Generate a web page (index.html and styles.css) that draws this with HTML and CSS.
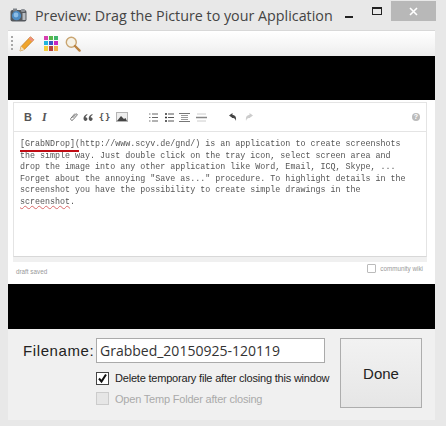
FILE: index.html
```html
<!DOCTYPE html>
<html lang="en">
<head>
    <meta charset="UTF-8">
    <title>Preview: Drag the Picture to your Application</title>
    <link rel="stylesheet" href="styles.css">
</head>
<body>
    <div class="window">
        <!-- Title bar -->
        <div class="titlebar">
            <svg class="app-icon" width="17" height="14" viewBox="0 0 17 14">
                <rect x="0.5" y="2" width="16" height="11.5" rx="2" fill="#55595e"/>
                <rect x="3" y="0.5" width="4" height="3" fill="#7d8288"/>
                <rect x="11" y="1" width="4" height="3" rx="1" fill="#8c9096"/>
                <circle cx="6.5" cy="7.7" r="4.6" fill="#4d8cc4"/>
                <circle cx="6" cy="7" r="2.4" fill="#8dbde6"/>
                <rect x="12.5" y="5" width="3" height="7" fill="#b9bdc2"/>
            </svg>
            <span class="title">Preview: Drag the Picture to your Application</span>
            <div class="window-buttons">
                <div class="btn-min"></div>
                <div class="btn-max"></div>
                <div class="btn-close">
                    <svg width="9" height="9" viewBox="0 0 9 9"><path d="M1 1l7 7M8 1l-7 7" stroke="#fff" stroke-width="1.6"/></svg>
                </div>
            </div>
        </div>

        <div class="client">
            <!-- Tool strip -->
            <div class="toolstrip">
                <div class="grip"></div>
                <svg width="16" height="17" viewBox="0 0 16 17">
                    <path d="M1 16l1.2-4.6L11.4 1.800l3.400 3L5.400 14.400z" fill="#f0a52c" stroke="#b9761a" stroke-width="0.7"/>
                    <path d="M11.400 1.800l3.400 3-1.800 1.900-3.400-3z" fill="#ee8f7c"/>
                    <path d="M1 16l1.200-4.600 3.200 3z" fill="#f6dfb6"/>
                </svg>
                <svg class="palette" width="14" height="15" viewBox="0 0 14 15">
                    <rect x="0" y="0" width="4" height="4" fill="#d63fb0"/>
                    <rect x="5" y="0" width="4" height="4" fill="#57b84a"/>
                    <rect x="10" y="0" width="4" height="4" fill="#3fb56c"/>
                    <rect x="0" y="5" width="4" height="4" fill="#22b5dc"/>
                    <rect x="5" y="5" width="4" height="4" fill="#3a57c4"/>
                    <rect x="10" y="5" width="4" height="4" fill="#c824c0"/>
                    <rect x="0" y="10" width="4" height="5" fill="#f2cf3a"/>
                    <rect x="5" y="10" width="4" height="5" fill="#b8433c"/>
                    <rect x="10" y="10" width="4" height="5" fill="#f0b04a"/>
                </svg>
                <svg width="16" height="16" viewBox="0 0 16 16">
                    <circle cx="6.300" cy="6.300" r="5" fill="#f6f2e6" stroke="#c9a571" stroke-width="1.400"/>
                    <path d="M10 10l4.600 4.600" stroke="#bb8340" stroke-width="2.400" stroke-linecap="round"/>
                </svg>
            </div>

            <div class="black-band top-band"></div>

            <!-- Embedded editor -->
            <div class="editor-panel">
                <div class="editor">
                    <div class="editor-tools">
                        <span class="tool-b">B</span>
                        <span class="tool-i">I</span>
                        <svg class="ico ico-link" width="9" height="10" viewBox="0 0 9 10"><path d="M3.500 6L7 2.200c.7-.8 1.700.2 1 1L4 7.800c-1.200 1.500-3.200-.2-2-1.700L6 1.500" fill="none" stroke="#666" stroke-width="0.900"/></svg>
                        <svg class="ico ico-quote" width="10" height="7" viewBox="0 0 10 7"><path d="M4.300 0C2 .8.500 2.200.500 4.500c0 1.500 1 2.500 2 2.500s1.900-.8 1.900-1.900S3.600 3.300 2.500 3.300C2.700 2.200 3.300 1.500 4.300 1zM9.500 0C7.200.8 5.700 2.200 5.700 4.500c0 1.500 1 2.500 2 2.500s1.900-.8 1.900-1.900-.8-1.800-1.900-1.800C7.900 2.200 8.500 1.500 9.500 1z" fill="#555"/></svg>
                        <span class="tool-code">{}</span>
                        <svg class="ico ico-image" width="12" height="10" viewBox="0 0 12 10"><rect width="12" height="10" fill="#b5b5b5"/><rect x="1" y="1" width="10" height="8" fill="#eee"/><path d="M1 9l4-5 3 3 1.500-1L11 9z" fill="#444"/></svg>
                        <svg class="ico ico-ol" width="9" height="9" viewBox="0 0 9 9"><path d="M0 1h1.500M0 4.500h1.500M0 8h1.500" stroke="#777"/><path d="M3 1h6M3 4.500h6M3 8h6" stroke="#666" stroke-width="1.200"/></svg>
                        <svg class="ico ico-ul" width="9" height="9" viewBox="0 0 9 9"><path d="M0 1h2M0 4.500h2M0 8h2" stroke="#333" stroke-width="1.400"/><path d="M3 1h6M3 4.500h6M3 8h6" stroke="#555" stroke-width="1.200"/></svg>
                        <svg class="ico ico-heading" width="11" height="9" viewBox="0 0 11 9"><path d="M0 .5h11M0 8.500h11" stroke="#777"/><path d="M2 2.500h7M2 4.500h7M2 6.500h7" stroke="#999"/></svg>
                        <svg class="ico ico-rule" width="11" height="9" viewBox="0 0 11 9"><path d="M1 1h9M1 8h9" stroke="#ccc"/><path d="M0 4.500h11" stroke="#888" stroke-width="1.500"/></svg>
                        <svg class="ico ico-undo" width="8" height="8" viewBox="0 0 8 8"><path d="M0 2.500L3.500 0v5zM3 2c3 0 4.500 1.500 4 6-.6-2.500-2-3-4-3z" fill="#444"/></svg>
                        <svg class="ico ico-redo" width="8" height="8" viewBox="0 0 8 8"><path d="M8 2.500L4.500 0v5zM5 2C2 2 .5 3.500 1 8c.6-2.500 2-3 4-3z" fill="#ccc"/></svg>
                        <div class="tool-help">?</div>
                    </div>
                    <div class="editor-text">[GrabNDrop](http://www.scyv.de/gnd/) is an application to create screenshots
the simple way. Just double click on the tray icon, select screen area and
drop the image into any other application like Word, Email, ICQ, Skype, ...
Forget about the annoying "Save as..." procedure. To highlight details in the
screenshot you have the possibility to create simple drawings in the
<span class="misspelled">screenshot</span>.<div class="scribble"></div></div>
                </div>
                <div class="editor-grip"></div>
                <div class="editor-footer">
                    <span>draft saved</span>
                    <label class="wiki"><span class="wiki-box"></span>community wiki</label>
                </div>
            </div>

            <div class="black-band bottom-band"></div>

            <!-- Save options -->
            <div class="save-bar">
                <div class="save-form">
                    <div class="file-row">
                        <span class="file-label">Filename:</span>
                        <div class="file-input">Grabbed_20150925-120119</div>
                    </div>
                    <div class="check-row">
                        <div class="check">
                            <svg width="11" height="11" viewBox="0 0 11 11"><path d="M2 5.500l2.500 3L9 1.500" fill="none" stroke="#111" stroke-width="2"/></svg>
                        </div>
                        <span>Delete temporary file after closing this window</span>
                    </div>
                    <div class="check-row disabled">
                        <div class="check"></div>
                        <span>Open Temp Folder after closing</span>
                    </div>
                </div>
                <button class="done">Done</button>
            </div>
        </div>
    </div>
</body>
</html>
```

FILE: styles.css
```css
/* General Styling */
html, body {
    margin: 0;
    padding: 0;
}

body {
    width: 446px;
    height: 426px;
    overflow: hidden;
    background-color: #e8e8e8;
    font-family: "Liberation Sans", Arial, sans-serif;
}

.window {
    display: flex;
    flex-direction: column;
    height: 420px;
    padding: 0 11px 0 8px;
}

/* Title bar */
.titlebar {
    display: flex;
    align-items: center;
    height: 30px;
    margin-right: -11px;
    padding-left: 2px;
    flex-shrink: 0;
}

.app-icon {
    margin-right: 8px;
}

.title {
    font-family: "Open Sans", sans-serif;
    font-size: 14.3px;
    color: #444;
    white-space: nowrap;
}

.window-buttons {
    display: flex;
    align-self: flex-start;
    align-items: center;
    margin-left: auto;
    padding-top: 1px;
    padding-right: 10px;
}

.btn-min {
    width: 8px;
    height: 2px;
    margin: 12px 0 0;
    background: #222;
}

.btn-max {
    width: 8px;
    height: 5px;
    margin: 0 9px 0 19px;
    border: 1px solid #222;
    border-top-width: 2px;
}

.btn-close {
    display: flex;
    align-items: center;
    justify-content: center;
    width: 45px;
    height: 20px;
    background: #b8b8b8;
}

.client {
    flex: 1;
    display: flex;
    flex-direction: column;
    border-top: 1px solid #d8d8d8;
    background: #f0f0f0;
}

/* Tool strip */
.toolstrip {
    display: flex;
    align-items: center;
    gap: 8px;
    height: 25px;
    padding-left: 3px;
    background: linear-gradient(#ffffff, #f5f5f5 60%, #ececec);
}

.grip {
    width: 2px;
    height: 15px;
    margin-right: -2px;
    background: repeating-linear-gradient(#a8a8a8 0 2px, transparent 2px 4px);
}

.palette {
    margin-left: 1px;
    margin-right: -1px;
}

.black-band {
    background: #000;
}

.top-band {
    height: 44px;
}

.bottom-band {
    height: 45px;
}

/* Embedded editor */
.editor-panel {
    height: 184px;
    padding: 2px 8px 0 5px;
    box-sizing: border-box;
    background: #fff;
}

.editor {
    height: 155px;
    box-sizing: border-box;
    border: 1px solid #e4e4e4;
    border-bottom-color: #d8d8d8;
}

.editor-tools {
    display: flex;
    align-items: center;
    height: 28px;
    padding-left: 10px;
    border-bottom: 1px solid #e4e4e4;
    color: #555;
}

.tool-b {
    font-weight: bold;
    font-size: 11px;
}

.tool-i {
    margin-left: 10px;
    font-family: "Liberation Serif", serif;
    font-style: italic;
    font-weight: bold;
    font-size: 12px;
}

.tool-code {
    margin-left: 6px;
    font-family: "DejaVu Sans Mono", monospace;
    font-size: 9px;
    font-weight: bold;
    letter-spacing: 1px;
}

.ico {
    flex-shrink: 0;
}

.ico-link {
    margin-left: 22px;
}

.ico-quote {
    margin-left: 5px;
}

.ico-image {
    margin-left: 5px;
}

.ico-ol {
    margin-left: 21px;
}

.ico-ul {
    margin-left: 7px;
}

.ico-heading {
    margin-left: 5px;
}

.ico-rule {
    margin-left: 6px;
}

.ico-undo {
    margin-left: 22px;
}

.ico-redo {
    margin-left: 8px;
}

.tool-help {
    width: 8px;
    height: 8px;
    margin-left: auto;
    margin-right: 6px;
    border-radius: 50%;
    background: #bbb;
    color: #fff;
    font-size: 7px;
    font-weight: bold;
    line-height: 8px;
    text-align: center;
}

.editor-text {
    position: relative;
    padding: 7px 0 0 6px;
    font-family: "Liberation Mono", monospace;
    font-size: 8.35px;
    line-height: 11.5px;
    color: #555;
    white-space: pre;
    filter: blur(0.25px);
}

/* red stroke drawn over the picture */
.scribble {
    position: absolute;
    left: 6px;
    top: 18px;
    width: 59px;
    height: 2px;
    background: #c00c14;
}

.misspelled {
    text-decoration: underline wavy #d96a6a 1px;
}

.editor-grip {
    height: 5px;
    background: #f0f0f0;
    text-align: center;
}

.editor-footer {
    display: flex;
    justify-content: space-between;
    align-items: center;
    height: 18px;
    padding: 0 4px 0 3px;
    font-size: 6.3px;
    color: #999;
}

.wiki {
    display: flex;
    align-items: center;
    gap: 4px;
    margin-top: -5px;
}

.wiki-box {
    width: 7px;
    height: 7px;
    border: 1px solid #bbb;
    border-radius: 1px;
}

/* Save options */
.save-bar {
    flex: 1;
    display: flex;
    justify-content: space-between;
    padding: 9px 13px 0 15px;
}

.save-form {
    display: flex;
    flex-direction: column;
}

.file-row {
    display: flex;
    align-items: center;
    gap: 12px;
    margin-bottom: 5px;
}

.file-label {
    width: 61px;
    font-size: 15px;
    letter-spacing: 0.6px;
    color: #222;
}

.file-input {
    width: 229px;
    height: 25px;
    box-sizing: border-box;
    padding: 0 3px;
    border: 1px solid #aaa;
    background: #fff;
    font-family: "Open Sans", sans-serif;
    font-size: 14px;
    line-height: 23px;
    color: #333;
    white-space: nowrap;
}

.check-row {
    display: flex;
    align-items: center;
    gap: 6px;
    height: 20.5px;
    margin-left: 73px;
    font-size: 11px;
    letter-spacing: -0.2px;
    color: #222;
    white-space: nowrap;
}

.check {
    display: flex;
    align-items: center;
    justify-content: center;
    width: 11px;
    height: 11px;
    border: 1px solid #444;
    background: #fff;
}

.disabled {
    color: #aaa;
}

.disabled .check {
    border-color: #ccc;
    background: #e6e6e6;
}

.done {
    width: 82px;
    height: 70px;
    border: 1px solid #adadad;
    background: linear-gradient(#f2f2f2, #e6e6e6);
    font-family: "Liberation Sans", Arial, sans-serif;
    font-size: 15px;
    color: #222;
    padding: 1px 0 0;
}
```
